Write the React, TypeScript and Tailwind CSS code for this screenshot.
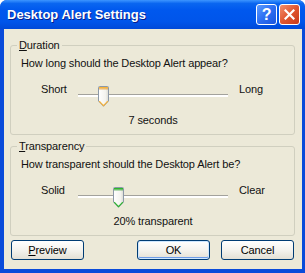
import type { ReactNode } from 'react';

type ThumbColor = 'orange' | 'green';

function Thumb({ color }: { color: ThumbColor }) {
  const band = color === 'orange' ? '#F7B33C' : '#2FB62F';
  const bandDark = color === 'orange' ? '#E08A12' : '#1C941C';
  return (
    <svg width="11" height="21" viewBox="0 0 11 21">
      <defs>
        <linearGradient id={`tb-${color}`} x1="0" y1="0" x2="1" y2="0">
          <stop offset="0" stopColor="#FFFFFF" />
          <stop offset="0.7" stopColor="#F3F3EF" />
          <stop offset="1" stopColor="#DADAD2" />
        </linearGradient>
      </defs>
      <path
        d="M1.5 0.5 H9.5 Q10.5 0.5 10.5 1.5 V15 L5.5 20.3 L0.5 15 V1.5 Q0.5 0.5 1.5 0.5 Z"
        fill={`url(#tb-${color})`}
        stroke="#8C99A8"
      />
      <rect x="1" y="1" width="9" height="1.5" fill={band} />
      <rect x="1" y="2.5" width="9" height="1" fill={bandDark} opacity="0.6" />
      <path d="M1.2 15.2 L5.5 19.6 L9.8 15.2" fill="none" stroke={band} strokeWidth="1.2" />
    </svg>
  );
}

function Slider({ left, right, pos, color }: { left: string; right: string; pos: number; color: ThumbColor }) {
  return (
    <div className="flex h-[21px] pl-[30px]">
      <div className="w-[37px] -mt-[3px] leading-[13px]">{left}</div>
      <div className="relative w-[150px]">
        <div className="mt-[8px] h-[3px] border-t border-[#A3A29C] border-b-2 border-b-white" />
        <div className="absolute top-0" style={{ left: pos }}>
          <Thumb color={color} />
        </div>
      </div>
      <div className="ml-[11px] -mt-[3px] leading-[13px]">{right}</div>
    </div>
  );
}

function Group({ title, hotkey, children }: { title: string; hotkey: string; children: ReactNode }) {
  return (
    <div className="relative ml-[6px] w-[285px] h-[90px] rounded-[3px] border border-[#D0CFBF]">
      <div className="absolute -top-[7px] left-[6px] px-[2px] bg-[#ECE9D8] leading-[13px]">
        <span className="underline underline-offset-[1px]">{hotkey}</span>
        {title.slice(1)}
      </div>
      {children}
    </div>
  );
}

function XPButton({ children, isDefault }: { children: ReactNode; isDefault?: boolean }) {
  return (
    <button
      className={`w-[73px] h-[20px] rounded-[3px] border border-[#003C74] bg-gradient-to-b from-[#FFFFFF] via-[#F4F3EE] to-[#E3E0D5] leading-[13px] text-black ${
        isDefault ? 'shadow-[inset_0_0_0_1px_#CEE7FF,inset_0_-1px_0_1px_#6E9CE8]' : ''
      }`}
    >
      {children}
    </button>
  );
}

export default function App() {
  return (
    <div className="w-[305px] h-[273px] flex flex-col rounded-t-[7px] overflow-hidden bg-[#0A4BDA] text-[11px] tracking-[-0.12px] text-[#111] [font-family:'Liberation_Sans',Arial,sans-serif]">
      <div className="h-[29px] flex items-center pl-[7px] pr-[5px] bg-[linear-gradient(to_bottom,#3D95FF_0%,#0A66F0_12%,#0058EE_35%,#0055EA_75%,#0049D8_100%)]">
        <div className="flex-1 text-white font-bold text-[13px] tracking-normal [text-shadow:1px_1px_0_#0A1E8A] leading-none">
          Desktop Alert Settings
        </div>
        <div className="flex gap-[2px]">
          <div className="w-[21px] h-[21px] rounded-[3px] border border-white bg-gradient-to-br from-[#5C9BFF] via-[#2D6EF2] to-[#1A54DE] flex items-center justify-center text-white font-bold text-[16px] leading-none">
            ?
          </div>
          <div className="w-[21px] h-[21px] rounded-[3px] border border-white bg-gradient-to-br from-[#F28E6C] via-[#E0562F] to-[#C8391A] flex items-center justify-center">
            <svg width="11" height="11" viewBox="0 0 11 11">
              <path d="M1.5 1.5 L9.5 9.5 M9.5 1.5 L1.5 9.5" stroke="#fff" strokeWidth="2.2" strokeLinecap="square" />
            </svg>
          </div>
        </div>
      </div>

      <div className="flex-1 ml-[4px] mr-[3px] mb-[4px] bg-[#ECE9D8] pt-[16px] flex flex-col">
        <Group title="Duration" hotkey="D">
          <div className="pl-[10px] pt-[11px] leading-[13px]">How long should the Desktop Alert appear?</div>
          <div className="mt-[16px]">
            <Slider left="Short" right="Long" pos={20} color="orange" />
          </div>
          <div className="ml-[67px] w-[150px] text-center mt-[7px] leading-[13px]">7 seconds</div>
        </Group>

        <div className="mt-[11px]">
          <Group title="Transparency" hotkey="T">
            <div className="pl-[10px] pt-[11px] leading-[13px]">How transparent should the Desktop Alert be?</div>
            <div className="mt-[16px]">
              <Slider left="Solid" right="Clear" pos={35} color="green" />
            </div>
            <div className="ml-[67px] w-[150px] text-center mt-[7px] leading-[13px]">20% transparent</div>
          </Group>
        </div>

        <div className="mt-[4px] flex justify-between pl-[7px] pr-[8px]">
          <XPButton>
            <span className="underline underline-offset-[1px]">P</span>review
          </XPButton>
          <div className="flex gap-[11px]">
            <XPButton isDefault>OK</XPButton>
            <XPButton>Cancel</XPButton>
          </div>
        </div>
      </div>
    </div>
  );
}
